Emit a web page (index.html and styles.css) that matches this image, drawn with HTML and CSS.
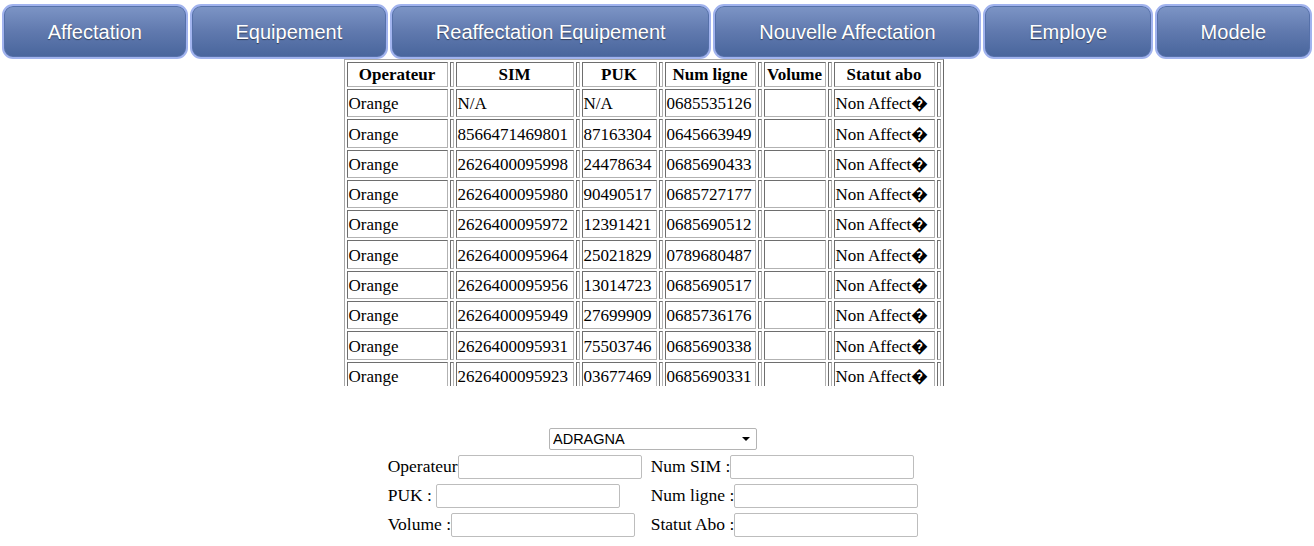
FILE: index.html
```html
<!DOCTYPE html>
<html lang="fr">
<head>
    <meta charset="UTF-8">
    <title>Affectation SIM</title>
    <link rel="stylesheet" href="styles.css">
</head>
<body>
    <nav class="menu">
        <a href="#" class="menu-btn">Affectation</a>
        <a href="#" class="menu-btn">Equipement</a>
        <a href="#" class="menu-btn">Reaffectation Equipement</a>
        <a href="#" class="menu-btn">Nouvelle Affectation</a>
        <a href="#" class="menu-btn">Employe</a>
        <a href="#" class="menu-btn">Modele</a>
    </nav>

    <div class="sim-list">
        <table class="sim-table">
            <tr>
                <th class="c-op">Operateur</th><th class="sep"></th>
                <th class="c-sim">SIM</th><th class="sep"></th>
                <th class="c-puk">PUK</th><th class="sep"></th>
                <th class="c-num">Num ligne</th><th class="sep"></th>
                <th class="c-vol">Volume</th><th class="sep"></th>
                <th class="c-stat">Statut abo</th><th class="sep"></th>
            </tr>
            <tr><td>Orange</td><td></td><td>N/A</td><td></td><td>N/A</td><td></td><td>0685535126</td><td></td><td></td><td></td><td>Non Affect&#xFFFD;</td><td></td></tr>
            <tr><td>Orange</td><td></td><td>8566471469801</td><td></td><td>87163304</td><td></td><td>0645663949</td><td></td><td></td><td></td><td>Non Affect&#xFFFD;</td><td></td></tr>
            <tr><td>Orange</td><td></td><td>2626400095998</td><td></td><td>24478634</td><td></td><td>0685690433</td><td></td><td></td><td></td><td>Non Affect&#xFFFD;</td><td></td></tr>
            <tr><td>Orange</td><td></td><td>2626400095980</td><td></td><td>90490517</td><td></td><td>0685727177</td><td></td><td></td><td></td><td>Non Affect&#xFFFD;</td><td></td></tr>
            <tr><td>Orange</td><td></td><td>2626400095972</td><td></td><td>12391421</td><td></td><td>0685690512</td><td></td><td></td><td></td><td>Non Affect&#xFFFD;</td><td></td></tr>
            <tr><td>Orange</td><td></td><td>2626400095964</td><td></td><td>25021829</td><td></td><td>0789680487</td><td></td><td></td><td></td><td>Non Affect&#xFFFD;</td><td></td></tr>
            <tr><td>Orange</td><td></td><td>2626400095956</td><td></td><td>13014723</td><td></td><td>0685690517</td><td></td><td></td><td></td><td>Non Affect&#xFFFD;</td><td></td></tr>
            <tr><td>Orange</td><td></td><td>2626400095949</td><td></td><td>27699909</td><td></td><td>0685736176</td><td></td><td></td><td></td><td>Non Affect&#xFFFD;</td><td></td></tr>
            <tr><td>Orange</td><td></td><td>2626400095931</td><td></td><td>75503746</td><td></td><td>0685690338</td><td></td><td></td><td></td><td>Non Affect&#xFFFD;</td><td></td></tr>
            <tr><td>Orange</td><td></td><td>2626400095923</td><td></td><td>03677469</td><td></td><td>0685690331</td><td></td><td></td><td></td><td>Non Affect&#xFFFD;</td><td></td></tr>
        </table>
    </div>

    <form class="affect-form">
        <div class="select-wrap">
            <select class="employe-select">
                <option>ADRAGNA</option>
            </select>
        </div>
        <div class="fields">
            <div class="field"><label>Operateur</label><input type="text"></div>
            <div class="field"><label>Num SIM :</label><input type="text"></div>
            <div class="field"><label>PUK :&nbsp;</label><input type="text"></div>
            <div class="field"><label>Num ligne :</label><input type="text"></div>
            <div class="field"><label>Volume :</label><input type="text"></div>
            <div class="field"><label>Statut Abo :</label><input type="text"></div>
        </div>
    </form>
</body>
</html>
```

FILE: styles.css
```css
* {
    box-sizing: border-box;
}

body {
    margin: 0;
    font-family: "Liberation Serif", "Times New Roman", serif;
    background: #fff;
    color: #000;
}

/* top menu */
.menu {
    display: flex;
    gap: 2px;
    padding: 4px 2px 0;
}

.menu-btn {
    flex: 1 1 auto;
    height: 55px;
    display: flex;
    align-items: center;
    justify-content: center;
    padding-top: 2px;
    font-family: "Liberation Sans", Arial, sans-serif;
    font-size: 20px;
    color: #fff;
    text-decoration: none;
    text-shadow: 0 1px 1px rgba(0, 0, 0, 0.45);
    background: linear-gradient(#7d95c6, #6079ae 50%, #48659c);
    border: 2px solid #a1b3ee;
    border-radius: 11px;
    box-shadow: inset 0 0 0 1px #5671aa;
}

/* sim table */
.sim-list {
    width: 627px;
    height: 327px;
    margin: 0 auto;
    overflow: hidden;
}

.sim-table {
    border-collapse: separate;
    border-spacing: 2px;
    border: 1px solid;
    border-color: #a8a8a8 #6a6a6a #6a6a6a #a8a8a8;
    font-size: 17px;
}

.sim-table th,
.sim-table td {
    padding: 1px;
    border: 1px solid;
    border-color: #6e6e6e #b2b2b2 #b2b2b2 #6e6e6e;
}

.sim-table th {
    line-height: 21px;
    font-weight: bold;
    text-align: center;
}

.sim-table td {
    line-height: 20px;
    padding-top: 4.3px;
    padding-bottom: 2px;
    text-align: left;
    white-space: nowrap;
}

.sim-table .c-op { width: 101px; }
.sim-table .c-sim { width: 118px; }
.sim-table .c-puk { width: 75px; }
.sim-table .c-num { width: 91px; }
.sim-table .c-vol { width: 62px; }
.sim-table .c-stat { width: 101px; }
.sim-table .sep { width: 4px; }

/* form */
.affect-form {
    padding-right: 8px;
}

.select-wrap {
    position: relative;
    width: 208px;
    margin: 42px auto 2px;
}

.select-wrap::after {
    content: "";
    position: absolute;
    right: 7px;
    top: 9px;
    border-left: 4px solid transparent;
    border-right: 4px solid transparent;
    border-top: 4px solid #000;
    pointer-events: none;
}

.employe-select {
    display: block;
    width: 208px;
    height: 22px;
    padding: 0 3px;
    font-family: "Liberation Sans", Arial, sans-serif;
    font-size: 14.5px;
    color: #000;
    background: #fff;
    border: 1px solid #b4b4b4;
    border-radius: 2px;
    appearance: none;
    -webkit-appearance: none;
}

.fields {
    display: grid;
    grid-template-columns: auto auto;
    grid-auto-rows: 29px;
    column-gap: 9px;
    justify-content: center;
    font-size: 17.5px;
}

.field {
    display: flex;
    align-items: center;
}

.field label {
    white-space: nowrap;
}

.field input {
    width: 184px;
    height: 24px;
    border: 1px solid #bdbdbd;
    border-radius: 2px;
    background: #fff;
}
```
